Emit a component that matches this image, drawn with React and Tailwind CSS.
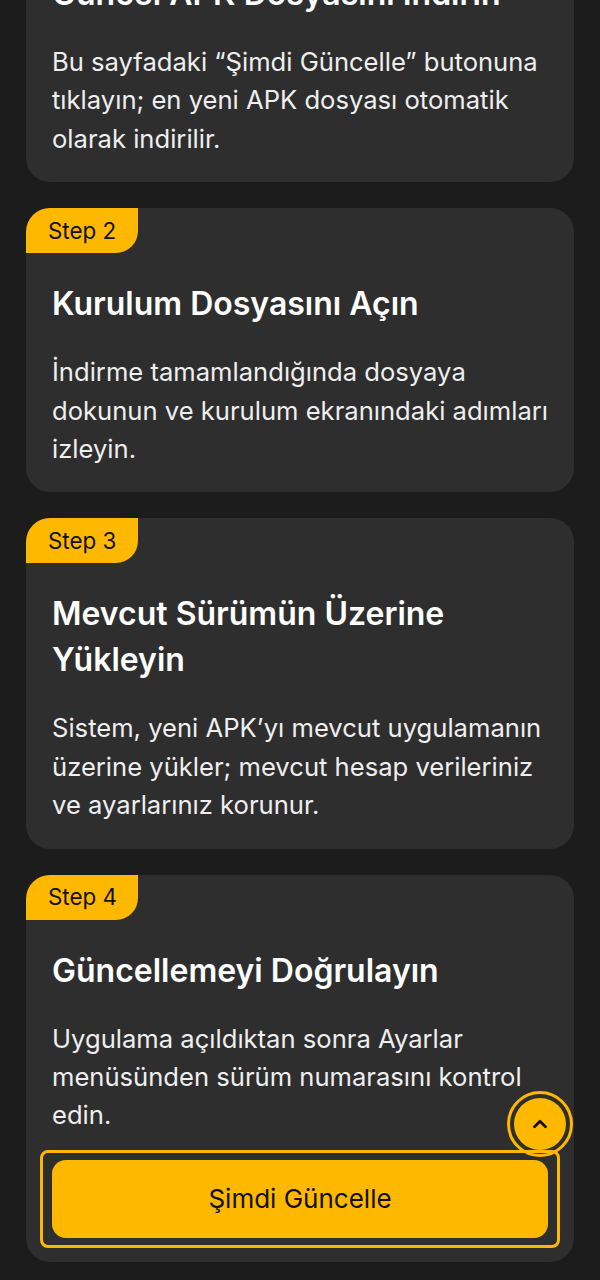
import React from "react";

const steps = [
  {
    step: "Step 1",
    title: "Güncel APK Dosyasını İndirin",
    body: "Bu sayfadaki “Şimdi Güncelle” butonuna tıklayın; en yeni APK dosyası otomatik olarak indirilir.",
  },
  {
    step: "Step 2",
    title: "Kurulum Dosyasını Açın",
    body: "İndirme tamamlandığında dosyaya dokunun ve kurulum ekranındaki adımları izleyin.",
  },
  {
    step: "Step 3",
    title: "Mevcut Sürümün Üzerine Yükleyin",
    body: "Sistem, yeni APK’yı mevcut uygulamanın üzerine yükler; mevcut hesap verileriniz ve ayarlarınız korunur.",
  },
  {
    step: "Step 4",
    title: "Güncellemeyi Doğrulayın",
    body: "Uygulama açıldıktan sonra Ayarlar menüsünden sürüm numarasını kontrol edin.",
    button: true,
  },
];

function Card({ s }) {
  return (
    <div className="rounded-[24px] bg-[#2e2e2e] pb-[24px]">
      <div className="inline-flex h-[45px] w-[112px] items-center rounded-tl-[24px] rounded-br-[22px] bg-[#ffb800] pl-[22px] text-[22.4px] text-[#111]">
        {s.step}
      </div>
      <div className="pl-[26px] pr-[22px]">
        <h2 className="mt-[28px] text-[32px] font-semibold leading-[46px] text-white">{s.title}</h2>
        <p className="mt-[26px] text-[25.6px] leading-[38.4px] text-[#efefef]">{s.body}</p>
        {s.button && (
          <div className="relative mr-[4px] mt-[25px]">
            <div className="pointer-events-none absolute -inset-x-[12px] -inset-y-[10px] rounded-[8px] border-[3px] border-[#ffb800]"></div>
            <button className="flex h-[78px] w-full items-center justify-center rounded-[14px] bg-[#ffb800] text-[26px] text-[#111]">
              Şimdi Güncelle
            </button>
          </div>
        )}
      </div>
    </div>
  );
}

export default function App() {
  return (
    <div
      className="relative h-[1280px] w-[600px] overflow-hidden bg-[#1c1c1c]"
      style={{ fontFamily: "Inter, 'Noto Sans', sans-serif" }}
    >
      <div className="-mt-[102px] flex flex-col gap-[26px] px-[26px]">
        {steps.map((s) => (
          <Card key={s.step} s={s} />
        ))}
      </div>
      <div className="absolute left-[507px] top-[1091px] flex h-[66px] w-[66px] items-center justify-center rounded-full border-[3px] border-[#ffb800]">
        <div className="flex h-[52px] w-[52px] items-center justify-center rounded-full bg-[#ffb800]">
          <svg width="22" height="22" viewBox="0 0 24 24" fill="none" stroke="#111" strokeWidth="3" strokeLinecap="round" strokeLinejoin="round">
            <path d="M6 15l6-6 6 6" />
          </svg>
        </div>
      </div>
    </div>
  );
}
